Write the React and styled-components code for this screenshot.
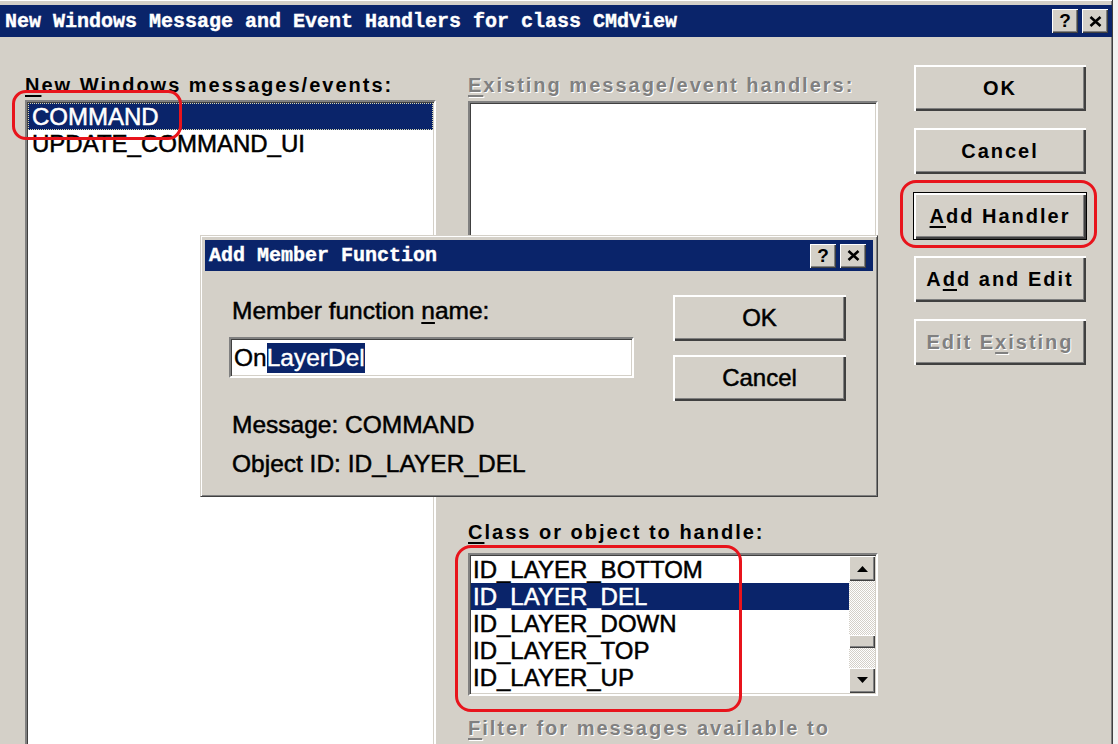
import styled, { createGlobalStyle } from 'styled-components';

const GlobalStyle = createGlobalStyle`
  html, body {
    margin: 0;
    padding: 0;
    background: #f2f2f2;
  }
  #root {
    width: 1118px;
    height: 744px;
    overflow: hidden;
  }
`;

const SANS = `'Liberation Sans', Arial, sans-serif`;
const MONO = `'Liberation Mono', 'Courier New', monospace`;
const NAVY = '#0a246a';
const FACE = '#d4d0c8';

const Window = styled.div`
  position: relative;
  width: 1113px;
  height: 744px;
  box-sizing: border-box;
  padding-top: 5px;
  background: ${FACE};
  border-right: 1px solid #404040;
  box-shadow: inset 0 1px #fff, inset -1px 0 #808080;
  overflow: hidden;
  font-family: ${SANS};
`;

const TitleBar = styled.div`
  height: ${p => p.$height}px;
  display: flex;
  align-items: center;
  justify-content: space-between;
  padding: 0 ${p => p.$right}px 0 ${p => p.$left}px;
  background: ${NAVY};
`;

const TitleText = styled.span`
  font-family: ${MONO};
  font-weight: bold;
  font-size: 20px;
  color: #fff;
  white-space: nowrap;
  -webkit-text-stroke: 0.4px #fff;
`;

const CaptionButtons = styled.div`
  display: flex;
  gap: 4px;
`;

const CaptionButton = styled.div`
  width: 26px;
  height: 24px;
  box-sizing: border-box;
  display: flex;
  align-items: center;
  justify-content: center;
  background: ${FACE};
  box-shadow: inset 1px 1px #fff, inset -1px -1px #404040, inset -2px -2px #808080;
  font-family: ${SANS};
  font-weight: bold;
  font-size: 19px;
  color: #000;
`;

const Body = styled.div`
  display: flex;
  height: 707px;
  padding-left: 25px;
`;

const Column = styled.div`
  display: flex;
  flex-direction: column;
  flex: none;
  width: ${p => p.$width}px;
  margin-left: ${p => p.$offset || 0}px;
  padding-top: ${p => p.$top}px;
`;

const Label = styled.div`
  height: 22px;
  line-height: 22px;
  margin-top: ${p => p.$mt || 0}px;
  font-size: 20px;
  font-weight: bold;
  letter-spacing: 2px;
  white-space: nowrap;
  color: ${p => (p.$disabled ? '#808080' : '#000')};
  text-shadow: ${p => (p.$disabled ? '1px 1px #fff' : 'none')};
`;

const Key = styled.span`
  text-decoration: underline;
  text-underline-offset: 3px;
`;

const ListBox = styled.div`
  display: flex;
  flex: none;
  height: ${p => p.$height}px;
  margin-top: ${p => p.$mt || 0}px;
  box-sizing: border-box;
  background: #fff;
  border: 2px solid;
  border-color: #808080 #fff #fff #808080;
  box-shadow: inset 1px 1px #404040, inset -1px -1px ${FACE};
  padding: 1px;
  overflow: hidden;
`;

const Rows = styled.div`
  flex: 1;
  display: flex;
  flex-direction: column;
`;

const ListRow = styled.div`
  height: 27px;
  line-height: 27px;
  padding-left: ${p => p.$indent}px;
  font-size: 24px;
  white-space: nowrap;
  -webkit-text-stroke: 0.5px currentColor;
  color: ${p => (p.$selected ? '#fff' : '#000')};
  background: ${p => (p.$selected ? NAVY : 'transparent')};
  outline: ${p => (p.$focused ? '1px dotted #d8d8b0' : 'none')};
  outline-offset: -1px;
`;

const ScrollBar = styled.div`
  width: 26px;
  display: flex;
  flex-direction: column;
  background: repeating-conic-gradient(${FACE} 0 25%, #fff 0 50%) 0 0 / 2px 2px;
`;

const ScrollButton = styled.div`
  height: ${p => p.$height}px;
  margin-top: ${p => p.$mt || 0}px;
  display: flex;
  align-items: center;
  justify-content: center;
  background: ${FACE};
  box-shadow: inset 1px 1px #fff, inset -1px -1px #404040, inset -2px -2px #808080;
`;

const ButtonStack = styled.div`
  display: flex;
  flex-direction: column;
  gap: 15px;
`;

const PushButton = styled.div`
  height: 48px;
  box-sizing: border-box;
  margin-top: ${p => (p.$isDefault ? 2 : 0)}px;
  display: flex;
  align-items: center;
  justify-content: center;
  background: ${FACE};
  border: 1px solid ${p => (p.$isDefault ? '#000' : FACE)};
  box-shadow: inset 2px 2px #fff, inset -2px -2px #404040, inset -3px -3px #808080;
  font-size: ${p => (p.$narrow ? 24 : 20)}px;
  font-weight: ${p => (p.$narrow ? 'normal' : 'bold')};
  letter-spacing: ${p => (p.$narrow ? 0 : 2)}px;
  -webkit-text-stroke: ${p => (p.$narrow ? '0.5px currentColor' : '0')};
  color: ${p => (p.$disabled ? '#808080' : '#000')};
  text-shadow: ${p => (p.$disabled ? '1px 1px #fff' : 'none')};
`;

const Dialog = styled.div`
  position: absolute;
  left: 200px;
  top: 235px;
  width: 678px;
  height: 262px;
  box-sizing: border-box;
  padding: 4px;
  display: flex;
  flex-direction: column;
  background: ${FACE};
  border: 1px solid;
  border-color: ${FACE} #404040 #404040 ${FACE};
  box-shadow: inset 1px 1px #fff, inset -1px -1px #808080;
`;

const DialogBody = styled.div`
  display: flex;
  gap: 38px;
  padding: 23px 0 0 24px;
`;

const DialogColumn = styled.div`
  display: flex;
  flex-direction: column;
  width: ${p => p.$width}px;
  margin-top: ${p => p.$top || 0}px;
  gap: ${p => p.$gap || 0}px;
`;

const DialogText = styled.div`
  height: 26px;
  line-height: 26px;
  margin-top: ${p => p.$mt || 0}px;
  padding-left: 3px;
  font-size: 24.5px;
  white-space: nowrap;
  -webkit-text-stroke: 0.5px #000;
  color: #000;
`;

const TextInput = styled.div`
  height: 41px;
  margin-top: 13px;
  box-sizing: border-box;
  display: flex;
  align-items: center;
  padding-left: 3px;
  background: #fff;
  border: 2px solid;
  border-color: #808080 #fff #fff #808080;
  box-shadow: inset 1px 1px #404040, inset -1px -1px ${FACE};
  font-size: 24.5px;
  white-space: nowrap;
  -webkit-text-stroke: 0.4px currentColor;
`;

const Selection = styled.span`
  display: inline-block;
  line-height: 30px;
  background: ${NAVY};
  color: #fff;
`;

const Annotation = styled.div`
  position: absolute;
  left: ${p => p.$x}px;
  top: ${p => p.$y}px;
  width: ${p => p.$w}px;
  height: ${p => p.$h}px;
  box-sizing: border-box;
  border: 3px solid #e8141c;
  border-radius: ${p => p.$r}px;
  pointer-events: none;
`;

const CloseGlyph = () => (
  <svg width="13" height="11" viewBox="0 0 13 11">
    <path d="M1.5 1 L11.5 10 M11.5 1 L1.5 10" stroke="#000" strokeWidth="2.6" />
  </svg>
);

const Arrow = ({ up }) => (
  <svg width="11" height="6" viewBox="0 0 11 6">
    <polygon points={up ? '0,6 11,6 5.5,0' : '0,0 11,0 5.5,6'} fill="#000" />
  </svg>
);

const Caption = () => (
  <CaptionButtons>
    <CaptionButton>?</CaptionButton>
    <CaptionButton>
      <CloseGlyph />
    </CaptionButton>
  </CaptionButtons>
);

const CLASS_ITEMS = ['ID_LAYER_BOTTOM', 'ID_LAYER_DEL', 'ID_LAYER_DOWN', 'ID_LAYER_TOP', 'ID_LAYER_UP'];

export default function App() {
  return (
    <>
      <GlobalStyle />
      <Window>
        <TitleBar $height={32} $left={5} $right={4}>
          <TitleText>New Windows Message and Event Handlers for class CMdView</TitleText>
          <Caption />
        </TitleBar>

        <Body>
          <Column $width={411} $top={37}>
            <Label>
              <Key>N</Key>ew Windows messages/events:
            </Label>
            <ListBox $height={700} $mt={4}>
              <Rows>
                <ListRow $indent={4} $selected $focused>COMMAND</ListRow>
                <ListRow $indent={4}>UPDATE_COMMAND_UI</ListRow>
              </Rows>
            </ListBox>
          </Column>

          <Column $width={410} $offset={32} $top={37}>
            <Label $disabled>
              <Key>E</Key>xisting message/event handlers:
            </Label>
            <ListBox $height={390} $mt={5} />
            <Label $mt={30}>
              <Key>C</Key>lass or object to handle:
            </Label>
            <ListBox $height={143} $mt={10}>
              <Rows>
                {CLASS_ITEMS.map(item => (
                  <ListRow key={item} $indent={2} $selected={item === 'ID_LAYER_DEL'}>
                    {item}
                  </ListRow>
                ))}
              </Rows>
              <ScrollBar>
                <ScrollButton $height={26}>
                  <Arrow up />
                </ScrollButton>
                <ScrollButton $height={13} $mt={54} />
                <ScrollButton $height={26} $mt={20}>
                  <Arrow />
                </ScrollButton>
              </ScrollBar>
            </ListBox>
            <Label $disabled $mt={21}>
              <Key>F</Key>ilter for messages available to
            </Label>
          </Column>

          <Column $width={174} $offset={35} $top={27}>
            <ButtonStack>
              <PushButton>OK</PushButton>
              <PushButton>Cancel</PushButton>
              <PushButton $isDefault>
                <Key>A</Key>dd Handler
              </PushButton>
              <PushButton>
                A<Key>d</Key>d and Edit
              </PushButton>
              <PushButton $disabled>
                Edit E<Key>x</Key>isting
              </PushButton>
            </ButtonStack>
          </Column>
        </Body>

        <Dialog>
          <TitleBar $height={31} $left={4} $right={7}>
            <TitleText>Add Member Function</TitleText>
            <Caption />
          </TitleBar>
          <DialogBody>
            <DialogColumn $width={405} $top={4}>
              <DialogText>
                Member function <Key>n</Key>ame:
              </DialogText>
              <TextInput>
                On<Selection>LayerDel</Selection>
              </TextInput>
              <DialogText $mt={34}>Message: COMMAND</DialogText>
              <DialogText $mt={13}>Object ID: ID_LAYER_DEL</DialogText>
            </DialogColumn>
            <DialogColumn $width={175} $gap={12}>
              <PushButton $narrow>OK</PushButton>
              <PushButton $narrow>Cancel</PushButton>
            </DialogColumn>
          </DialogBody>
        </Dialog>

        <Annotation $x={12} $y={90} $w={170} $h={50} $r={14} />
        <Annotation $x={900} $y={180} $w={197} $h={68} $r={16} />
        <Annotation $x={455} $y={545} $w={287} $h={167} $r={16} />
      </Window>
    </>
  );
}
